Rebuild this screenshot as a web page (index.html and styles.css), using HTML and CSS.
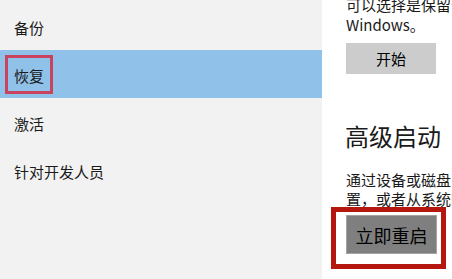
FILE: index.html
```html
<!DOCTYPE html>
<html lang="zh-CN">
<head>
<meta charset="utf-8">
<title>更新和安全 - 恢复</title>
<link rel="stylesheet" href="styles.css">
</head>
<body>
<div class="window">
  <nav class="sidebar">
    <div class="nav-item">备份</div>
    <div class="nav-item selected">
      <span class="nav-label">恢复</span>
      <span class="mark-pink"></span>
    </div>
    <div class="nav-item">激活</div>
    <div class="nav-item">针对开发人员</div>
  </nav>
  <main class="content">
    <p class="para reset-text">如果你的电脑未正常运行，重置电脑可能会解决问题。重置时，<br>可以选择是保留个人文件还是删除个人文件，然后重新安装<br>Windows。</p>
    <button class="btn btn-light">开始</button>
    <h2 class="heading">高级启动</h2>
    <p class="para adv-text">通过设备或磁盘(如 U 盘或 DVD)启动，更改 Windows 启动设<br>置，或者从系统映像还原 Windows。此操作将重启电脑。</p>
    <div class="restart-wrap">
      <button class="btn btn-dark">立即重启</button>
      <span class="mark-red"></span>
    </div>
  </main>
</div>
</body>
</html>
```
FILE: styles.css
```css
html, body {
  margin: 0;
  padding: 0;
  width: 452px;
  height: 279px;
  overflow: hidden;
  background: #ffffff;
}

body {
  font-family: "Noto Sans CJK SC", "Noto Sans", sans-serif;
  color: #1a1a1a;
}

.window {
  display: flex;
  height: 279px;
}

.sidebar {
  flex: 0 0 322px;
  background: #f2f2f2;
  padding-top: 2px;
  box-sizing: border-box;
}

.nav-item {
  position: relative;
  height: 48px;
  box-sizing: border-box;
  padding: 4px 0 0 14px;
  line-height: 44px;
  font-size: 15px;
  color: #1a1a1a;
}

.nav-item.selected {
  background: #8fc1e9;
}

.mark-pink {
  position: absolute;
  left: 5px;
  top: 5px;
  width: 48px;
  height: 39px;
  box-sizing: border-box;
  border: 3px solid #c9435e;
}

.content {
  flex: 1 1 auto;
  padding-left: 24px;
  overflow: hidden;
}

.para {
  margin: 0;
  font-size: 15px;
  white-space: nowrap;
  color: #1a1a1a;
}

.reset-text {
  line-height: 20px;
  margin-top: -25px;
}

.btn {
  display: block;
  border: none;
  padding: 0;
  font-family: inherit;
  color: #000;
}

.btn-light {
  margin-top: 8px;
  width: 90px;
  height: 31px;
  background: #cccccc;
  font-size: 15px;
}

.heading {
  margin: 46px 0 0 -1px;
  font-size: 24px;
  line-height: 32px;
  font-weight: 400;
  color: #1a1a1a;
}

.adv-text {
  margin-top: 18px;
  line-height: 19px;
}

.restart-wrap {
  position: relative;
  margin-top: 7px;
  width: 91px;
}

.btn-dark {
  width: 91px;
  height: 39px;
  background: #7f7f7f;
  border: 1px solid #a3a3a3;
  box-sizing: border-box;
  font-size: 18px;
}

.mark-red {
  position: absolute;
  left: -15px;
  top: -8px;
  width: 115px;
  height: 62px;
  box-sizing: border-box;
  border: 5px solid #b5170e;
}
```
